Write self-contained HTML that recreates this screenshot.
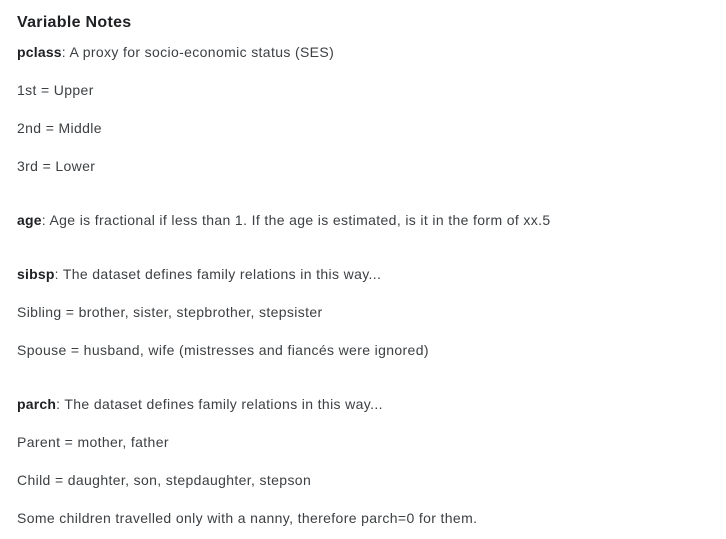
<!DOCTYPE html>
<html><head><style>
body{margin:0;width:726px;height:539px;background:#fff;font-family:"Liberation Sans",Arial,sans-serif;color:#3c4043;position:relative;overflow:hidden}
div{position:absolute;left:17px;font-size:14px;line-height:18px;white-space:nowrap;letter-spacing:0.36px}
b{color:#202124;letter-spacing:0.2px}
.t{font-size:16px;font-weight:bold;color:#202124;line-height:20px;letter-spacing:0.3px}
</style></head><body>
<div class="t" style="top:13px">Variable Notes</div>
<div style="top:43px"><b>pclass</b>: A proxy for socio-economic status (SES)</div>
<div style="top:81px">1st = Upper</div>
<div style="top:119px">2nd = Middle</div>
<div style="top:157px">3rd = Lower</div>
<div style="top:211px"><b>age</b>: Age is fractional if less than 1. If the age is estimated, is it in the form of xx.5</div>
<div style="top:265px"><b>sibsp</b>: The dataset defines family relations in this way...</div>
<div style="top:303px">Sibling = brother, sister, stepbrother, stepsister</div>
<div style="top:341px">Spouse = husband, wife (mistresses and fiancés were ignored)</div>
<div style="top:395px"><b>parch</b>: The dataset defines family relations in this way...</div>
<div style="top:433px">Parent = mother, father</div>
<div style="top:471px">Child = daughter, son, stepdaughter, stepson</div>
<div style="top:509px">Some children travelled only with a nanny, therefore parch=0 for them.</div>
</body></html>
